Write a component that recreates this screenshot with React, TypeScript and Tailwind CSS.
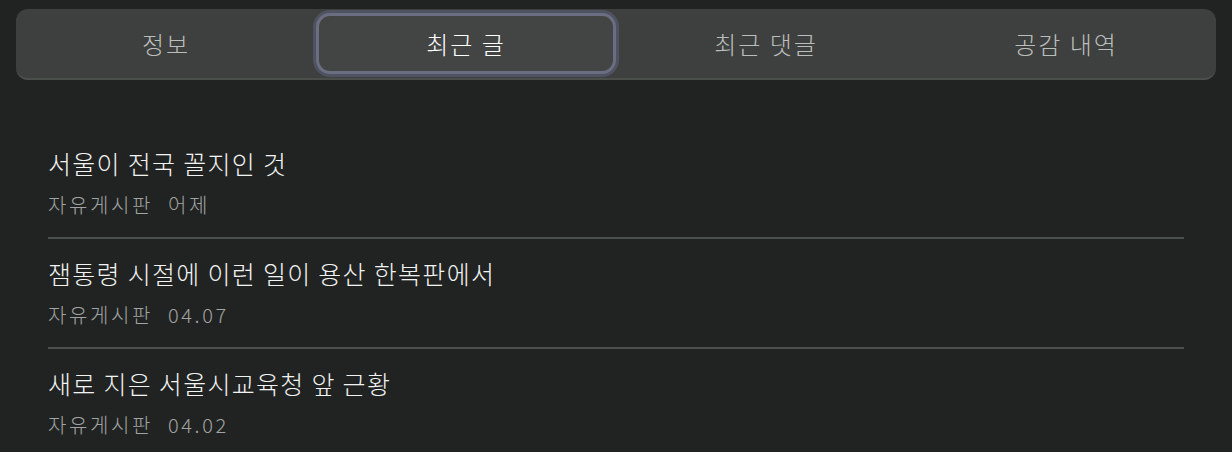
const tabs = ["정보", "최근 글", "최근 댓글", "공감 내역"];

const posts = [
  { title: "서울이 전국 꼴지인 것", board: "자유게시판", date: "어제" },
  { title: "잼통령 시절에 이런 일이 용산 한복판에서", board: "자유게시판", date: "04.07" },
  { title: "새로 지은 서울시교육청 앞 근황", board: "자유게시판", date: "04.02" },
];

export default function App() {
  const active = 1;

  return (
    <div
      className="w-[1232px] h-[452px] overflow-hidden bg-[#212322] font-light"
      style={{ fontFamily: '"Noto Sans CJK KR", "Noto Sans", sans-serif' }}
    >
      <div className="pt-[9px] px-4">
        <div className="grid grid-cols-4 h-[71px] py-1 rounded-[12px] bg-[#3e403f] border-b-2 border-[#4a4f4c]">
          {tabs.map((t, i) => (
            <button
              key={t}
              className={
                i === active
                  ? "flex items-center justify-center rounded-[14px] bg-[#434544] border-[3px] border-[#6a6e80] ring-[3px] ring-[#4f5260] text-[24px] tracking-[2px] text-white"
                  : "flex items-center justify-center text-[24px] tracking-[2px] text-[#babebb]"
              }
            >
              {t}
            </button>
          ))}
        </div>
      </div>

      <ul className="mt-[49px] px-12">
        {posts.map((p, i) => (
          <li
            key={p.title}
            className={
              i < posts.length - 1
                ? "pt-[18px] pb-[18px] border-b-2 border-[#4a504d]"
                : "pt-[18px] pb-[18px]"
            }
          >
            <div className="text-[25px] leading-[32px] tracking-[1.3px] text-[#f2f3f2]">{p.title}</div>
            <div className="mt-[12px] flex gap-[15px] text-[20px] leading-[28px] tracking-[2.6px] text-[#a2a4a3]">
              <span>{p.board}</span>
              <span>{p.date}</span>
            </div>
          </li>
        ))}
      </ul>
    </div>
  );
}
